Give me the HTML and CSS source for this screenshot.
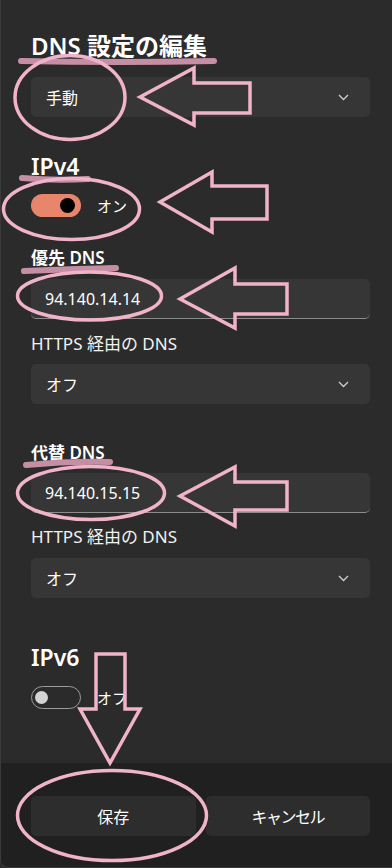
FILE: index.html
```html
<!DOCTYPE html>
<html lang="ja">
<head>
<meta charset="utf-8">
<title>DNS 設定の編集</title>
<link rel="stylesheet" href="styles.css">
</head>
<body>
<div class="dialog">
  <div class="content">
    <h1 class="title">DNS 設定の編集</h1>
    <div class="select m-select1"><span>手動</span><svg class="chev" width="11" height="7" viewBox="0 0 11 7"><path d="M1 1l4.5 4.5L10 1" fill="none" stroke="#d0d0d0" stroke-width="1.3"/></svg></div>

    <h2 class="section m-ipv4">IPv4</h2>
    <div class="toggle-row m-tog4"><span class="toggle on"><span class="knob"></span></span><span class="toggle-label">オン</span></div>

    <div class="label strong m-pref">優先 DNS</div>
    <div class="input m-input1">94.140.14.14</div>
    <div class="label m-https1">HTTPS 経由の DNS</div>
    <div class="select m-select2"><span>オフ</span><svg class="chev" width="11" height="7" viewBox="0 0 11 7"><path d="M1 1l4.5 4.5L10 1" fill="none" stroke="#d0d0d0" stroke-width="1.3"/></svg></div>

    <div class="label strong m-alt">代替 DNS</div>
    <div class="input m-input2">94.140.15.15</div>
    <div class="label m-https2">HTTPS 経由の DNS</div>
    <div class="select m-select3"><span>オフ</span><svg class="chev" width="11" height="7" viewBox="0 0 11 7"><path d="M1 1l4.5 4.5L10 1" fill="none" stroke="#d0d0d0" stroke-width="1.3"/></svg></div>

    <h2 class="section m-ipv6">IPv6</h2>
    <div class="toggle-row m-tog6"><span class="toggle off"><span class="knob"></span></span><span class="toggle-label">オフ</span></div>
  </div>
  <div class="footer">
    <button class="btn">保存</button>
    <button class="btn btn-narrow">キャンセル</button>
  </div>

  <svg class="annotations" width="392" height="868" viewBox="0 0 392 868">
    <g class="underline">
      <path d="M21 61 Q120 63 214 61"/>
      <path d="M22 178 Q55 181 88 179"/>
      <path d="M24 271 Q70 269 116 268"/>
      <path d="M26 465 Q68 461 110 462"/>
    </g>
    <g class="mark">
      <ellipse cx="70" cy="97.5" rx="55" ry="42"/>
      <polygon points="140,97 194,68 194,83 250,83 250,113 194,113 194,125"/>
      <ellipse cx="71.5" cy="209" rx="68" ry="30.5"/>
      <polygon points="160,202 212,172 212,186 267,186 267,219 212,219 212,232"/>
      <ellipse cx="89.5" cy="296" rx="72" ry="24"/>
      <polygon points="180,299 235,268 235,284 287,284 287,314 235,314 235,328"/>
      <ellipse cx="91" cy="493" rx="73.5" ry="26.5"/>
      <polygon points="180,496 235,467 235,482 287,482 287,510 235,510 235,526"/>
      <polygon points="96,654 125,654 125,709 140,709 110,763 80,709 96,709"/>
      <ellipse cx="112" cy="815.5" rx="94.5" ry="45"/>
    </g>
  </svg>
</div>
</body>
</html>
```

FILE: styles.css
```css
html, body {
  margin: 0;
  padding: 0;
  background: #2b2b2b;
}

.dialog {
  position: relative;
  width: 392px;
  height: 868px;
  box-sizing: border-box;
  display: flex;
  flex-direction: column;
  background: #2b2b2b;
  border-left: 1px solid #3a3a3a;
  border-bottom: 1px solid #3a3a3a;
  border-bottom-left-radius: 8px;
  overflow: hidden;
  color: #ffffff;
  font-family: "Noto Sans", "Noto Sans CJK JP", sans-serif;
}

.content {
  flex: 1;
  padding: 30px 22px 0 30px;
  display: flex;
  flex-direction: column;
}

.title {
  margin: 0;
  height: 32px;
  line-height: 32px;
  font-size: 24px;
  font-weight: 600;
}

.section {
  margin: 0;
  height: 30px;
  line-height: 30px;
  font-size: 23px;
  font-weight: 600;
}

.select {
  height: 40px;
  box-sizing: border-box;
  display: flex;
  align-items: center;
  justify-content: space-between;
  padding: 0 21px 0 15px;
  background: #363636;
  border-radius: 5px;
  font-size: 16px;
}

.chev {
  display: block;
}

.input {
  height: 40px;
  box-sizing: border-box;
  display: flex;
  align-items: center;
  padding: 0 14px;
  background: #363636;
  border-radius: 5px;
  border-bottom: 1px solid #8c8c8c;
  font-size: 16px;
}

.label {
  height: 22px;
  line-height: 22px;
  font-size: 17px;
  font-weight: 400;
  color: #f2f2f2;
}

.label.strong {
  font-weight: 600;
  color: #ffffff;
}

.toggle-row {
  height: 24px;
  display: flex;
  align-items: center;
}

.toggle {
  width: 50px;
  height: 23px;
  box-sizing: border-box;
  border-radius: 12px;
  display: flex;
  align-items: center;
}

.toggle.on {
  background: #e8866b;
  justify-content: flex-end;
  padding-right: 6px;
}

.toggle.on .knob {
  width: 15px;
  height: 15px;
  border-radius: 50%;
  background: #000000;
}

.toggle.off {
  border: 1.5px solid #9c9c9c;
  padding-left: 3px;
}

.toggle.off .knob {
  width: 13px;
  height: 13px;
  border-radius: 50%;
  background: #d4d4d4;
}

.toggle-label {
  margin-left: 16px;
  font-size: 15px;
}

.m-select1 { margin-top: 15px; }
.m-ipv4 { margin-top: 34px; }
.m-tog4 { margin-top: 12px; }
.m-pref { margin-top: 30px; }
.m-input1 { margin-top: 10px; }
.m-https1 { margin-top: 14px; }
.m-select2 { margin-top: 9px; }
.m-alt { margin-top: 38px; }
.m-input2 { margin-top: 9px; }
.m-https2 { margin-top: 13px; }
.m-select3 { margin-top: 10px; }
.m-ipv6 { margin-top: 44px; }
.m-tog6 { margin-top: 13px; }

.footer {
  height: 104px;
  box-sizing: border-box;
  background: #202020;
  padding: 33px 22px 0 30px;
  display: grid;
  grid-template-columns: 1fr 1fr;
  column-gap: 10px;
  align-items: start;
}

.btn {
  height: 40px;
  border: none;
  border-radius: 5px;
  background: #2d2d2d;
  color: #ffffff;
  font-family: "Noto Sans", "Noto Sans CJK JP", sans-serif;
  font-size: 16px;
  padding: 0;
}

.btn-narrow {
  letter-spacing: -1.5px;
}

.annotations {
  position: absolute;
  top: 0;
  left: -1px;
  pointer-events: none;
}

.annotations .underline path {
  fill: none;
  stroke: #c68ea5;
  stroke-width: 6;
  stroke-linecap: round;
}

.annotations .mark ellipse,
.annotations .mark polygon {
  fill: none;
  stroke: #f0b3ca;
  stroke-width: 3.5;
  stroke-linejoin: miter;
}
```
